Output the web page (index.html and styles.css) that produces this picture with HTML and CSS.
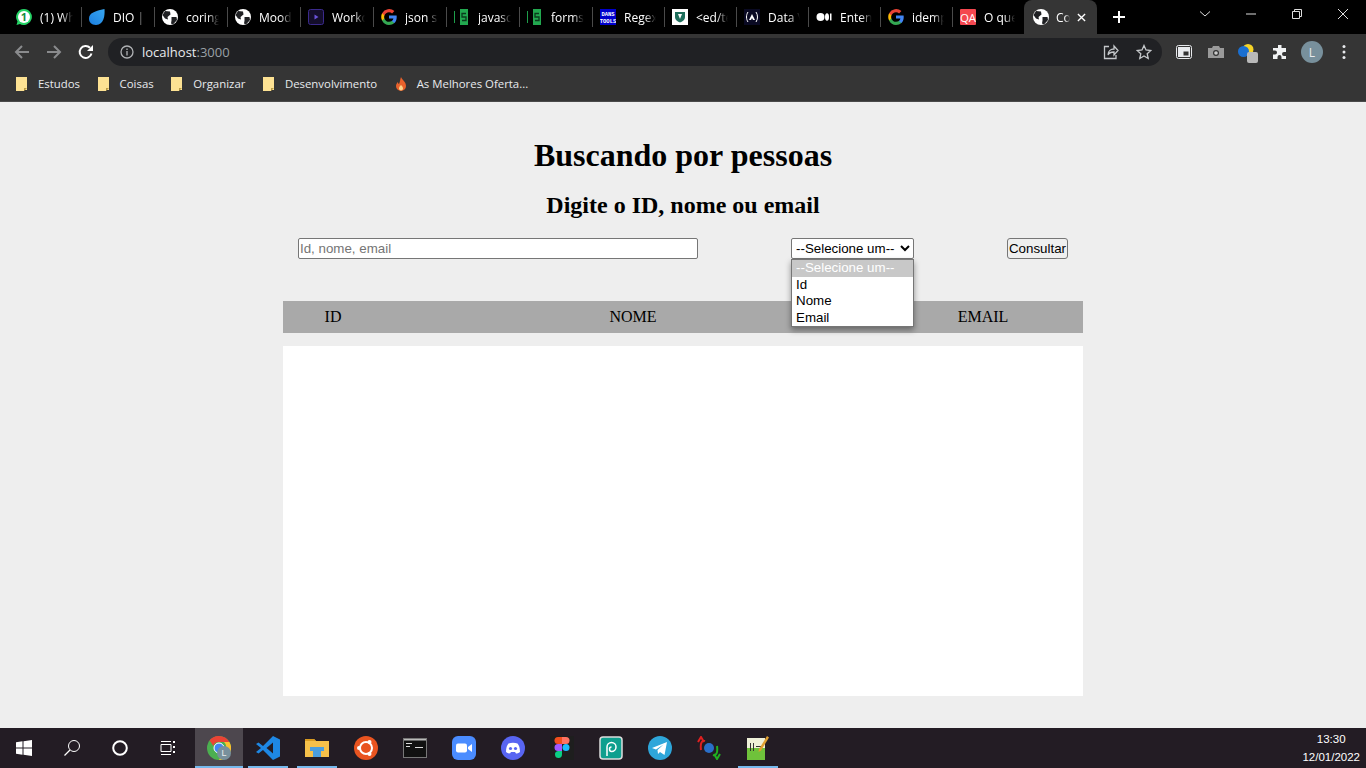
FILE: index.html
```html
<!DOCTYPE html>
<html lang="pt-BR">
<head>
    <meta charset="UTF-8">
    <title>Consulta</title>
    <link rel="stylesheet" href="styles.css">
</head>
<body>
    <svg class="defs" width="0" height="0">
        <symbol id="globe" viewBox="0 0 16 16">
            <circle cx="8" cy="8" r="8" fill="#fff"/>
            <path d="M3 2 8 2.500 8.500 5.500 5.500 8 6 10.500 3 9.500 .5 6ZM9.500 8 14.500 8 15 11 11 15.500 9 14.500 9.500 11.500Z" fill="#202124"/>
        </symbol>
        <symbol id="google" viewBox="0 0 16 16">
            <path d="M15.700 8.200c0-.6 0-1.100-.1-1.600H8v3h4.400a3.700 3.700 0 0 1-1.600 2.500v2h2.600c1.500-1.400 2.300-3.500 2.300-5.900z" fill="#4285f4"/>
            <path d="M8 16c2.200 0 4-.7 5.400-2l-2.600-2c-.7.5-1.700.8-2.800.8-2.100 0-3.900-1.400-4.600-3.400H1.100v2.100A8 8 0 0 0 8 16z" fill="#34a853"/>
            <path d="M3.400 9.400a4.800 4.800 0 0 1 0-3V4.300H1.100a8 8 0 0 0 0 7.200z" fill="#fbbc05"/>
            <path d="M8 3.200c1.200 0 2.300.4 3.100 1.200l2.300-2.300A8 8 0 0 0 1.100 4.300l2.300 2.100C4.100 4.500 5.900 3.200 8 3.200z" fill="#ea4335"/>
        </symbol>
        <symbol id="folder" viewBox="0 0 12 14">
            <path d="M0 0h11v13H0z" fill="#fde293"/>
            <path d="M8 14l3-3H8z" fill="#b89a45"/>
            <path d="M0 13h8v1H0z" fill="#fde293"/>
        </symbol>
        <symbol id="replit" viewBox="0 0 16 16">
            <rect x="0" y="2" width="1" height="12" fill="#1e9e4a"/>
            <rect x="6" y="0" width="8" height="16" fill="#22a84f"/>
            <path d="M12 4.500H8V8H12V11.500H8" fill="none" stroke="#0a3a1c" stroke-width="1.300"/>
        </symbol>
    </svg>

    <div class="tabstrip">
        <div class="tab"><svg class="favicon" viewBox="0 0 16 16"><path d="M8 0a8 8 0 1 1-4 15L.5 16l1-3.500A8 8 0 0 1 8 0z" fill="#25d366"/><circle cx="8" cy="8" r="6" fill="#fff"/><text x="8" y="11.500" class="fav-num">1</text></svg><span class="tab-title">(1) WhatsApp</span></div>
        <div class="tab"><svg class="favicon" viewBox="0 0 16 16"><defs><linearGradient id="dio" x1="0" y1="1" x2="1" y2="0"><stop offset="0" stop-color="#1c7fe0"/><stop offset="1" stop-color="#37a6f0"/></linearGradient></defs><path d="M15.500 0C16 6 15 16 7 16 2 16 0 13 0 9.500 0 4 6 2 15.500 0z" fill="url(#dio)"/></svg><span class="tab-title">DIO | Curso</span></div>
        <div class="tab"><svg class="favicon"><use href="#globe"/></svg><span class="tab-title">coringa</span></div>
        <div class="tab"><svg class="favicon"><use href="#globe"/></svg><span class="tab-title">Moodle</span></div>
        <div class="tab"><svg class="favicon" viewBox="0 0 16 16"><rect x=".5" y=".5" width="15" height="15" rx="2" fill="#140e2b" stroke="#3b2a8c"/><path d="M6.500 5.500 10.500 8l-4 2.500z" fill="#6a52d9"/></svg><span class="tab-title">Workout</span></div>
        <div class="tab"><svg class="favicon"><use href="#google"/></svg><span class="tab-title">json server</span></div>
        <div class="tab"><svg class="favicon"><use href="#replit"/></svg><span class="tab-title">javascript</span></div>
        <div class="tab"><svg class="favicon"><use href="#replit"/></svg><span class="tab-title">forms</span></div>
        <div class="tab tab-narrow"><svg class="favicon" viewBox="0 0 16 16"><rect width="16" height="16" fill="#00c"/><text x="8" y="6.500" class="fav-dans">DANS</text><text x="8" y="14" class="fav-dans">TOOLS</text></svg><span class="tab-title">Regex</span></div>
        <div class="tab tab-narrow"><svg class="favicon" viewBox="0 0 16 16"><rect width="16" height="16" fill="#fff"/><path d="M3 3h10v5c0 3-2.500 4.500-5 5.500C5.500 12.500 3 11 3 8z" fill="#1f6f5c"/><path d="M6 5h4l-2 5z" fill="#fff"/></svg><span class="tab-title">&lt;ed/tech</span></div>
        <div class="tab tab-narrow"><svg class="favicon" viewBox="0 0 16 16"><rect width="16" height="16" fill="#0a0a23"/><path d="M4 3C2 6 2 10 4 13M12 3c2 3 2 7 0 10" fill="none" stroke="#fff"/><path d="M8 5l3 6H9L8 9l-1 2H5z" fill="#fff"/></svg><span class="tab-title">Data Vis</span></div>
        <div class="tab tab-narrow"><svg class="favicon" viewBox="0 0 16 16"><circle cx="4.500" cy="8" r="4" fill="#fff"/><ellipse cx="11" cy="8" rx="2" ry="3.800" fill="#fff"/><rect x="14" y="4.500" width="1.500" height="7" fill="#fff"/></svg><span class="tab-title">Entenda</span></div>
        <div class="tab tab-narrow"><svg class="favicon"><use href="#google"/></svg><span class="tab-title">idempotente</span></div>
        <div class="tab tab-short"><svg class="favicon" viewBox="0 0 16 16"><rect width="16" height="16" rx="1" fill="#f4474f"/><text x="8" y="12.500" class="fav-qa">QA</text></svg><span class="tab-title">O que é</span></div>
        <div class="tab tab-active"><svg class="favicon"><use href="#globe"/></svg><span class="tab-title">Consulta</span><svg class="tab-close" viewBox="0 0 10 10"><path d="M1 1l8 8M9 1l-8 8"/></svg></div>
        <svg class="new-tab" viewBox="0 0 12 12"><path d="M6 0v12M0 6h12"/></svg>
        <div class="win-btns">
            <svg class="win-icon" viewBox="0 0 12 12"><path d="M1 3.500 6 8l5-4.500"/></svg>
            <svg class="win-icon" viewBox="0 0 12 12"><path d="M1 6h10"/></svg>
            <svg class="win-icon" viewBox="0 0 12 12"><path d="M1.500 3.500h7v7h-7zM3.500 3.500v-2h7v7h-2"/></svg>
            <svg class="win-icon" viewBox="0 0 12 12"><path d="M1 1l10 10M11 1 1 11"/></svg>
        </div>
    </div>

    <div class="toolbar">
        <svg class="nav-icon dim" viewBox="0 0 16 16"><path d="M15 8H2M8 2 2 8l6 6"/></svg>
        <svg class="nav-icon dim" viewBox="0 0 16 16"><path d="M1 8h13M8 2l6 6-6 6"/></svg>
        <svg class="nav-icon" viewBox="0 0 16 16"><path d="M13.500 9.500A6 6 0 1 1 12 3.800"/><path class="solid" d="M15 1v6H9z"/></svg>
        <div class="omnibox">
            <svg class="info-icon" viewBox="0 0 14 14"><circle cx="7" cy="7" r="6"/><path d="M7 6v4.500M7 3.500v1.500"/></svg>
            <span class="url">localhost<span class="url-port">:3000</span></span>
            <svg class="omni-icon" viewBox="0 0 16 16"><path d="M6 2.500H1.500v12H13V11"/><path d="M5 11c0-4 3-6 6-6V2l4 4.500L11 11V8c-3 0-5 .5-6 3z"/></svg>
            <svg class="omni-icon" viewBox="0 0 16 16"><path d="M8 1.500l2 4.500 4.800.5-3.600 3.200 1 4.800L8 12l-4.200 2.500 1-4.800-3.600-3.200L6 6z"/></svg>
        </div>
        <div class="ext-icons">
            <svg class="ext" viewBox="0 0 16 16"><rect x=".5" y="1.500" width="15" height="13" rx="2" fill="none" stroke="#e8eaed"/><rect x="2" y="3" width="12" height="10" fill="#e8eaed"/><rect x="7.500" y="7.500" width="5" height="4" fill="#333"/></svg>
            <svg class="ext" viewBox="0 0 16 16"><path d="M0 4h4l1-2h6l1 2h4v10H0z" fill="#9a9a9a"/><circle cx="8" cy="9" r="3" fill="#333"/><circle cx="8" cy="9" r="1.800" fill="#ccc"/></svg>
            <svg class="ext ext-wide" viewBox="0 0 20 20"><circle cx="10" cy="6.500" r="5.500" fill="#f5d327"/><circle cx="5.500" cy="8.500" r="5.500" fill="#1a6fd1"/><rect x="9" y="9" width="11" height="11" rx="2" fill="#b9b9b9"/></svg>
            <svg class="ext" viewBox="0 0 16 16"><path d="M6 1h3.500v3H14v4h-2a2 2 0 0 0 0 4h2v3H9.500v-2a2 2 0 0 0-4 0v2H1v-4.500h2a2 2 0 0 0 0-4H1V4h5z" fill="#f1f3f4"/></svg>
            <span class="avatar">L</span>
            <svg class="ext menu-dots" viewBox="0 0 4 16"><circle cx="2" cy="2.500" r="1.500"/><circle cx="2" cy="8" r="1.500"/><circle cx="2" cy="13.500" r="1.500"/></svg>
        </div>
    </div>

    <div class="bookmarks">
        <span class="bookmark"><svg class="bm-icon"><use href="#folder"/></svg>Estudos</span>
        <span class="bookmark"><svg class="bm-icon"><use href="#folder"/></svg>Coisas</span>
        <span class="bookmark"><svg class="bm-icon"><use href="#folder"/></svg>Organizar</span>
        <span class="bookmark"><svg class="bm-icon"><use href="#folder"/></svg>Desenvolvimento</span>
        <span class="bookmark"><svg class="bm-icon" viewBox="0 0 12 14"><path d="M6 0c1 3 5 4.500 5 9a5 5 0 0 1-10 0c0-2 1-3 2-4 0 1 .5 2 1 2C5 5 5 3 6 0z" fill="#e8622c"/><path d="M6 8c1 1 2 2 2 3.500a2 2 0 0 1-4 0C4 10 5 9 6 8z" fill="#fbd38a"/></svg>As Melhores Oferta...</span>
    </div>

    <main class="page">
        <h1>Buscando por pessoas</h1>
        <h2>Digite o ID, nome ou email</h2>
        <form class="search">
            <input class="search-input" type="text" placeholder="Id, nome, email">
            <div class="select-wrap">
                <select class="search-select"><option>--Selecione um--</option></select>
                <ul class="select-menu">
                    <li class="selected">--Selecione um--</li>
                    <li>Id</li>
                    <li>Nome</li>
                    <li>Email</li>
                </ul>
            </div>
            <button class="search-btn" type="button">Consultar</button>
        </form>
        <div class="table-head">
            <span class="col-id">ID</span>
            <span class="col-name">NOME</span>
            <span class="col-email">EMAIL</span>
        </div>
        <div class="results"></div>
    </main>

    <div class="taskbar">
        <span class="task"><svg class="task-icon" viewBox="0 0 16 16"><path d="M0 2.200 6.500 1.300V7.500H0zM7.500 1.200 16 0v7.500H7.500zM0 8.500h6.500v6.200L0 13.800zM7.500 8.500H16V16l-8.500-1.200z" fill="#fff"/></svg></span>
        <span class="task"><svg class="task-icon" viewBox="0 0 16 16"><circle cx="10" cy="6" r="5.500" fill="none" stroke="#fff"/><path d="M6 10 .5 15.500" stroke="#fff" stroke-width="1.300"/></svg></span>
        <span class="task"><svg class="task-icon" viewBox="0 0 16 16"><circle cx="8" cy="8" r="6.800" fill="none" stroke="#fff" stroke-width="2"/></svg></span>
        <span class="task"><svg class="task-icon" viewBox="0 0 16 16" fill="none" stroke="#fff"><path d="M1 4.500h10v7H1zM1 1.500h10M1 14.500h10"/><path d="M14 1v2M14 6v2M14 11v2" stroke-width="2"/></svg></span>
        <span class="task task-app-slot task-current"><svg class="task-app" viewBox="0 0 24 24"><circle cx="12" cy="12" r="12" fill="#4caf50"/><path d="M12 0a12 12 0 0 1 10.400 6H12a6 6 0 0 0-5.700 4L2.500 4.300A12 12 0 0 1 12 0z" fill="#ea4335"/><path d="M22.400 6A12 12 0 0 1 12 24l5.200-9a6 6 0 0 0-.2-9z" fill="#fbc02d"/><circle cx="12" cy="12" r="5" fill="#4285f4" stroke="#fff"/><circle cx="17" cy="17" r="7" fill="#78909c"/><text x="17" y="20" class="chrome-l">L</text></svg></span>
        <span class="task task-app-slot task-open"><svg class="task-app" viewBox="0 0 24 24"><path d="M17 0 24 3.500v17L17 24 7 14l-4.500 3.500L0 16l5-4-5-4 2.500-1.500L7 10z" fill="#1e88e5"/><path d="M17 6.500 10.500 12l6.500 5.500z" fill="#231c24"/></svg></span>
        <span class="task task-app-slot task-open"><svg class="task-app" viewBox="0 0 24 24"><path d="M0 3h9l2 2h13v16H0z" fill="#f5c04a"/><path d="M0 3h9l2 2H0z" fill="#d99b20"/><path d="M5 11h14v4h-3v6h-8v-6H5z" fill="#4a9ede"/></svg></span>
        <span class="task task-app-slot"><svg class="task-app" viewBox="0 0 24 24"><circle cx="12" cy="12" r="12" fill="#e95420"/><circle cx="12" cy="12" r="6" fill="none" stroke="#fff" stroke-width="2"/><circle cx="5" cy="12" r="2" fill="#fff"/><circle cx="15.500" cy="6" r="2" fill="#fff"/><circle cx="15.500" cy="18" r="2" fill="#fff"/></svg></span>
        <span class="task task-app-slot"><svg class="task-app" viewBox="0 0 24 24"><rect x=".5" y="2.500" width="23" height="19" fill="#111" stroke="#777"/><rect x="1" y="3" width="22" height="1.500" fill="#bbb"/><path d="M3 7h6v1H3zM3 10h4v1H3zM12 11h8v1h-8z" fill="#ddd"/></svg></span>
        <span class="task task-app-slot"><svg class="task-app" viewBox="0 0 24 24"><rect width="24" height="24" rx="6" fill="#4a8cff"/><rect x="4" y="7.500" width="11" height="9" rx="2" fill="#fff"/><path d="M16 11l4-3v8l-4-3z" fill="#fff"/></svg></span>
        <span class="task task-app-slot"><svg class="task-app" viewBox="0 0 24 24"><circle cx="12" cy="12" r="12" fill="#5865f2"/><path d="M5 16c0-4 1-7 2.500-8.500C10 6.500 14 6.500 16.500 7.500 18 9 19 12 19 16c-1.500 1-3 1.500-4 1.500l-1-1.500h-4l-1 1.500C8 17.500 6.500 17 5 16z" fill="#fff"/><circle cx="9.500" cy="12.500" r="1.600" fill="#5865f2"/><circle cx="14.500" cy="12.500" r="1.600" fill="#5865f2"/></svg></span>
        <span class="task task-app-slot"><svg class="task-app" viewBox="0 0 24 24"><rect width="24" height="24" fill="#1e1e1e"/><path d="M12 1H8a3.500 3.500 0 0 0 0 7h4z" fill="#f24e1e"/><path d="M12 1h4a3.500 3.500 0 0 1 0 7h-4z" fill="#ff7262"/><path d="M12 8H8a3.500 3.500 0 0 0 0 7h4z" fill="#a259ff"/><circle cx="16" cy="11.500" r="3.500" fill="#1abcfe"/><path d="M8 15h4v3.500A3.500 3.500 0 1 1 8 15z" fill="#0acf83"/></svg></span>
        <span class="task task-app-slot"><svg class="task-app" viewBox="0 0 24 24"><rect x="1" y="1" width="22" height="22" rx="3" fill="#0e9f8e" stroke="#ddd" stroke-width="1.500"/><path d="M8 20V11a4.500 4.500 0 1 1 4.500 4.500c-1.500 0-2-1-2-2.500s1-2 2-2" fill="none" stroke="#fff" stroke-width="1.500"/></svg></span>
        <span class="task task-app-slot"><svg class="task-app" viewBox="0 0 24 24"><circle cx="12" cy="12" r="12" fill="#2ea6da"/><path d="M4 12 19 6l-2.500 13-4.500-3-2 2-.5-4 6-5.500-7.500 5z" fill="#fff"/></svg></span>
        <span class="task task-app-slot"><svg class="task-app" viewBox="0 0 24 24" fill="none"><circle cx="12" cy="12" r="5" fill="#2a6fc9"/><path d="M8 5C5 4 3 7 4 14M1 6l3-5 3 5" stroke="#e02020" stroke-width="2"/><path d="M16 19c3 1 5-2 4-9M17 18l3 5 3-5" stroke="#20b020" stroke-width="2"/></svg></span>
        <span class="task task-app-slot task-open"><svg class="task-app" viewBox="0 0 24 24"><path d="M1 2h18v22H1z" fill="#eef0d8"/><path d="M1 12h18v12H1z" fill="#6fc23b"/><path d="M4 7h1v8H4zM7 7h1v8H7zM10 10h5v1h-5z" fill="#333"/><path d="M21 0l2 1.500-8 13-2.500 1.500.5-3z" fill="#e0a030"/></svg></span>
        <div class="clock">13:30<br>12/01/2022</div>
    </div>
</body>
</html>
```

FILE: styles.css
```css
* {
    box-sizing: border-box;
    margin: 0;
    padding: 0;
}

html, body {
    height: 100%;
}

body {
    display: flex;
    flex-direction: column;
    overflow: hidden;
    background: #eee;
    font-family: "Liberation Sans", Arial, sans-serif;
}

.defs {
    position: absolute;
}

/* abas */
.tabstrip {
    display: flex;
    align-items: center;
    flex: none;
    height: 34px;
    padding-left: 9px;
    background: #000;
}

.tab {
    display: flex;
    align-items: center;
    flex: none;
    width: 73px;
    height: 34px;
    padding: 0 9px 0 7px;
    position: relative;
    color: #fff;
    font-family: "Open Sans", sans-serif;
    font-size: 12px;
}

.tab::after {
    content: "";
    position: absolute;
    right: 0;
    top: 7px;
    width: 1px;
    height: 20px;
    background: #4a4a4a;
}

.tab-narrow {
    width: 72px;
}

.tab-short {
    width: 71px;
}

.tab-short::after,
.tab-active::after {
    display: none;
}

.favicon {
    flex: none;
    width: 16px;
    height: 16px;
    margin-right: 8px;
}

.fav-num {
    font-size: 11px;
    font-weight: bold;
    text-anchor: middle;
    fill: #128c3e;
}

.fav-qa {
    font-size: 11.500px;
    text-anchor: middle;
    fill: #fff;
}

.fav-dans {
    font-family: "Liberation Mono", monospace;
    font-size: 5.500px;
    font-weight: bold;
    text-anchor: middle;
    fill: #fff;
}

.tab-title {
    flex: 1;
    overflow: hidden;
    white-space: nowrap;
    -webkit-mask-image: linear-gradient(to right, #000 65%, transparent);
    mask-image: linear-gradient(to right, #000 65%, transparent);
}

.tab-active {
    width: 73px;
    padding: 0 11px 0 9px;
    background: #353535;
    border-radius: 8px 8px 0 0;
}

.tab-active .favicon {
    margin-right: 7px;
}

.tab-close {
    flex: none;
    width: 9px;
    height: 9px;
    margin-left: 7px;
    fill: none;
    stroke: #fff;
    stroke-width: 1.500;
}

.new-tab {
    flex: none;
    width: 12px;
    height: 12px;
    margin-left: 16px;
    fill: none;
    stroke: #fff;
    stroke-width: 2;
}

.win-btns {
    display: flex;
    margin-left: auto;
    height: 100%;
}

.win-icon {
    width: 46px;
    height: 12px;
    margin-top: 8px;
    fill: none;
    stroke: #ddd;
    stroke-width: 1;
}

/* barra de endereco */
.toolbar {
    display: flex;
    align-items: center;
    flex: none;
    height: 32px;
    padding: 4px 0 0 14px;
    background: #353535;
}

.nav-icon {
    flex: none;
    width: 16px;
    height: 16px;
    margin-right: 16px;
    fill: none;
    stroke: #fff;
    stroke-width: 2;
}

.nav-icon .solid {
    fill: #fff;
    stroke: none;
}

.nav-icon.dim {
    stroke: #8a8b8d;
}

.omnibox {
    display: flex;
    align-items: center;
    flex: 1;
    height: 28px;
    margin-left: -2px;
    padding: 0 10px 0 12px;
    background: #202124;
    border-radius: 14px;
}

.info-icon {
    width: 14px;
    height: 14px;
    margin-right: 8px;
    fill: none;
    stroke: #b0b2b5;
    stroke-width: 1.300;
}

.url {
    flex: 1;
    color: #e8eaed;
    font-family: "Open Sans", sans-serif;
    font-size: 13px;
}

.url-port {
    color: #9aa0a6;
}

.omni-icon {
    width: 16px;
    height: 16px;
    margin-left: 17px;
    fill: none;
    stroke: #c4c7ca;
    stroke-width: 1.300;
}

.ext-icons {
    display: flex;
    align-items: center;
    flex: none;
    gap: 16px;
    padding: 0 14px;
}

.ext {
    width: 16px;
    height: 16px;
}

.ext-wide {
    width: 20px;
    height: 20px;
    margin: 2px -2px 0;
}

.avatar {
    display: flex;
    align-items: center;
    justify-content: center;
    width: 22px;
    height: 22px;
    margin: 0 -3px;
    border-radius: 50%;
    background: #78909c;
    color: #e8eaed;
    font-family: "Open Sans", sans-serif;
    font-size: 12px;
}

.menu-dots {
    width: 4px;
    margin: 0 6px;
    fill: #e8eaed;
}

/* favoritos */
.bookmarks {
    display: flex;
    align-items: center;
    flex: none;
    height: 36px;
    padding-left: 16px;
    gap: 17.500px;
    background: #353535;
    border-bottom: 1px solid #4a4a4a;
    color: #e8eaed;
    font-family: "Open Sans", sans-serif;
    font-size: 11.400px;
}

.bookmark {
    display: flex;
    align-items: center;
}

.bm-icon {
    width: 12px;
    height: 14px;
    margin-right: 10px;
}

/* pagina */
.page {
    flex: 1;
    width: 800px;
    margin: 0 auto;
    font-family: "Liberation Serif", "Times New Roman", serif;
}

h1 {
    margin-top: 35px;
    text-align: center;
    font-size: 32px;
    line-height: 37px;
}

h2 {
    margin-top: 17px;
    text-align: center;
    font-size: 24px;
    line-height: 28px;
}

.search {
    display: flex;
    align-items: flex-start;
    justify-content: space-between;
    margin-top: 19px;
    padding: 0 15px;
    font-family: "Liberation Sans", Arial, sans-serif;
}

.search-input {
    width: 400px;
    height: 21px;
    padding: 1px;
    border: 1px solid #767676;
    border-radius: 2px;
    background: #fff;
    font-family: inherit;
    font-size: 13.333px;
}

.search-input::placeholder {
    color: #757575;
}

.select-wrap {
    position: relative;
    width: 123px;
}

.search-select {
    display: block;
    width: 123px;
    height: 21px;
    border: 1px solid #767676;
    border-radius: 2px;
    background: #fff;
    font-family: inherit;
    font-size: 13.333px;
}

/* lista aberta do select */
.select-menu {
    position: absolute;
    top: 21px;
    left: 0;
    width: 123px;
    list-style: none;
    border: 1px solid #767676;
    background: #fff;
    box-shadow: 0 3px 6px rgba(0, 0, 0, 0.4);
    font-size: 13.333px;
    line-height: 16px;
}

.select-menu li {
    height: 16.300px;
    padding-left: 4px;
    color: #000;
}

.select-menu .selected {
    height: 17px;
    background: #c8c8c8;
    color: #fff;
    line-height: 15px;
}

.search-btn {
    width: 61px;
    height: 21px;
    border: 1px solid #767676;
    border-radius: 3px;
    background: #efefef;
    color: #000;
    font-family: inherit;
    font-size: 13.333px;
}

.table-head {
    display: flex;
    align-items: center;
    height: 32px;
    margin-top: 42px;
    background: #a9a9a9;
    font-size: 16px;
}

.col-id {
    width: 100px;
    text-align: center;
}

.col-name {
    width: 500px;
    text-align: center;
}

.col-email {
    width: 200px;
    text-align: center;
}

.results {
    height: 350px;
    margin-top: 13px;
    background: #fff;
}

/* barra de tarefas */
.taskbar {
    display: flex;
    align-items: center;
    flex: none;
    height: 40px;
    background: #231c24;
}

.task {
    display: flex;
    align-items: center;
    justify-content: center;
    flex: none;
    width: 48px;
    height: 40px;
}

.task-app-slot {
    width: 49px;
}

.task-icon {
    width: 16px;
    height: 16px;
}

.task-app {
    width: 24px;
    height: 24px;
}

.task-open {
    background: linear-gradient(#76b9ed, #76b9ed) center bottom / 40px 2px no-repeat;
}

.task-current {
    width: 48px;
    margin-left: 3px;
    background: linear-gradient(#76b9ed, #76b9ed) center bottom / 100% 2px no-repeat, #4d474e;
}

.chrome-l {
    fill: #e8eaed;
    font-size: 9px;
    text-anchor: middle;
}

.clock {
    margin-left: auto;
    padding-right: 6px;
    color: #fff;
    font-size: 11.500px;
    line-height: 18px;
    text-align: center;
}
```
